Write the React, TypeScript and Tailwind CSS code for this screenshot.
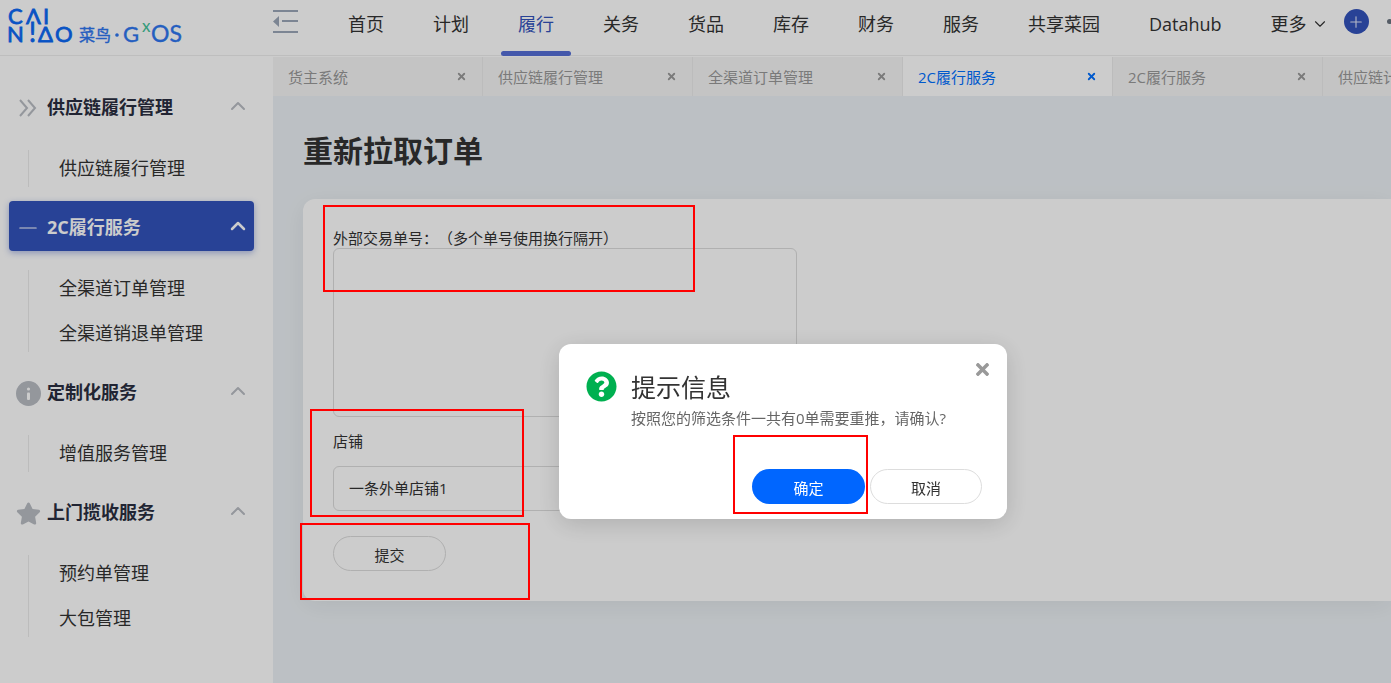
import React, { useState } from 'react';
import { ChevronDown, ChevronUp, Minus, Plus, X } from 'lucide-react';
import { FaQuestionCircle, FaStar, FaTimes } from 'react-icons/fa';

type MenuGroup = {
  title: string;
  icon: React.ReactNode;
  active?: boolean;
  items: string[];
};

const DoubleChevron: React.FC = () => (
  <svg width="18" height="18" viewBox="0 0 18 18" fill="none" stroke="currentColor" strokeWidth="2">
    <path d="M1 1l7 8-7 8M9 1l7 8-7 8" />
  </svg>
);

const InfoIcon: React.FC = () => (
  <svg width="25" height="25" viewBox="0 0 25 25">
    <circle cx="12.5" cy="12.5" r="12.5" fill="currentColor" />
    <circle cx="12.5" cy="8" r="1.6" fill="#ffffff" />
    <rect x="11" y="11.5" width="3" height="7.5" rx="1" fill="#ffffff" />
  </svg>
);

const navItems = ['首页', '计划', '履行', '关务', '货品', '库存', '财务', '服务', '共享菜园', 'Datahub'];

const tabs = ['货主系统', '供应链履行管理', '全渠道订单管理', '2C履行服务', '2C履行服务', '供应链计划'];

const menuGroups: MenuGroup[] = [
  {
    title: '供应链履行管理',
    icon: <DoubleChevron />,
    items: ['供应链履行管理'],
  },
  {
    title: '2C履行服务',
    icon: <Minus size={30} strokeWidth={1} />,
    active: true,
    items: ['全渠道订单管理', '全渠道销退单管理'],
  },
  {
    title: '定制化服务',
    icon: <InfoIcon />,
    items: ['增值服务管理'],
  },
  {
    title: '上门揽收服务',
    icon: <FaStar size={25} />,
    items: ['预约单管理', '大包管理'],
  },
];

const Logo: React.FC = () => (
  <svg width="190" height="56" viewBox="0 0 190 56" className="shrink-0 font-['Lato','Noto_Sans_CJK_SC',sans-serif]">
    <g fill="#0b68f5" stroke="#0b68f5" strokeWidth="0.8" fontSize="22">
      <text x="4" y="24">C</text>
      <text x="22" y="24">Λ</text>
      <text x="39" y="24">I</text>
      <text x="3" y="42">N</text>
      <text x="25" y="42" fontSize="26">!</text>
      <text x="34" y="42">Δ</text>
      <text x="51" y="42">O</text>
    </g>
    <g fill="#2e76f0" stroke="#2e76f0" strokeWidth="0.4">
      <text x="75" y="41" fontSize="16">菜鸟</text>
      <circle cx="113" cy="35" r="1.6" />
      <text x="119" y="42" fontSize="22">G</text>
      <text x="147" y="42" fontSize="23">OS</text>
    </g>
    <text x="138" y="32" fontSize="17" fill="#41c39a">x</text>
  </svg>
);

const Header: React.FC = () => (
  <header className="flex h-14 shrink-0 overflow-hidden bg-white shadow-[inset_0_-1px_0_#eeeeee]">
    <div className="w-[273px] shrink-0 pl-1">
      <Logo />
    </div>
    <button type="button" aria-label="收起菜单" className="mr-[50px] h-[43px] shrink-0">
      <svg width="25" height="24" viewBox="0 0 25 24" fill="#9ca7b8">
        <rect width="25" height="2" />
        <rect x="9" y="10" width="16" height="2" />
        <rect y="21" width="25" height="2" />
        <path d="M0 11.500 6 6v11z" />
      </svg>
    </button>
    <nav className="flex shrink-0 gap-[49px] text-lg text-[#333333]">
      {navItems.map((item) => (
        <a
          key={item}
          href="#"
          className={item === '履行' ? 'relative leading-[48px] text-[#3353bc]' : 'leading-[48px]'}
        >
          {item}
          {item === '履行' && (
            <span className="absolute -inset-x-[17px] bottom-0 h-[5px] rounded-full bg-[#556fd6]" />
          )}
        </a>
      ))}
      <button type="button" className="flex h-12 items-center gap-1">
        更多
        <ChevronDown size={18} strokeWidth={1.5} />
      </button>
    </nav>
    <div className="flex h-[43px] shrink-0 items-center gap-[18px] pl-[15px]">
      <button
        type="button"
        aria-label="新增"
        className="flex size-[25px] items-center justify-center rounded-full bg-[#3353bc] text-[#dfe5f8]"
      >
        <Plus size={18} strokeWidth={1.5} />
      </button>
      <span className="size-[5px] rounded-full bg-[#6b7480]" />
    </div>
  </header>
);

const Sidebar: React.FC = () => (
  <aside className="w-[273px] shrink-0 bg-white pt-[25px] pr-[19px] pl-[9px]">
    {menuGroups.map((group) => (
      <div key={group.title} className="mb-2.5">
        <button
          type="button"
          className={
            group.active
              ? 'flex h-[50px] w-full items-center rounded bg-[#3353bc] pr-2 pl-[5px] text-white shadow-[0_2px_6px_rgba(51,83,188,0.4)]'
              : 'flex h-[50px] w-full items-center pr-2 pl-[5px] text-[#2a2e40]'
          }
        >
          <span
            className={
              group.active
                ? 'flex w-7 items-center justify-center pt-1'
                : 'flex w-7 items-center justify-center pt-1 text-[#b9bdc4]'
            }
          >
            {group.icon}
          </span>
          <span className="ml-[5px] flex-1 pt-0.5 text-left text-lg font-bold">{group.title}</span>
          <ChevronUp
            size={24}
            strokeWidth={group.active ? 2.5 : 2}
            className={group.active ? '-mr-1' : '-mr-1 text-[#b9bdc4]'}
          />
        </button>
        <div className="mt-[15px] flex">
          <div className="my-1 ml-[19px] w-px bg-[#ebebeb]" />
          <ul className="pl-[30px]">
            {group.items.map((item) => (
              <li key={item} className="h-[45px] text-lg leading-[45px]">
                <a href="#">{item}</a>
              </li>
            ))}
          </ul>
        </div>
      </div>
    ))}
  </aside>
);

const TabBar: React.FC = () => (
  <div className="flex h-10 shrink-0 overflow-hidden border-t border-white bg-[#f6f6f6] text-[15px]">
    {tabs.map((tab, index) => (
      <div
        key={index}
        className={
          index === 3
            ? 'flex w-[210px] shrink-0 items-center justify-between border-r border-[#ececec] bg-white px-[15px] text-[#0070ff]'
            : 'flex w-[210px] shrink-0 items-center justify-between border-r border-[#ececec] px-[15px] text-[#999999]'
        }
      >
        <a href="#" className="pt-0.5">{tab}</a>
        <button type="button" aria-label="关闭标签">
          <X size={11} strokeWidth={4} />
        </button>
      </div>
    ))}
  </div>
);

const OrderForm: React.FC = () => {
  const [orderNos, setOrderNos] = useState('');

  return (
    <form
      onSubmit={(e) => e.preventDefault()}
      className="flex flex-col items-start rounded-l-xl bg-white px-[30px] pt-[29px] pb-[30px] text-[15px] shadow-[0_5px_24px_rgba(0,0,0,0.06)]"
    >
      <label htmlFor="orderNos" className="leading-5 [text-spacing-trim:space-all]">
        外部交易单号：（多个单号使用换行隔开）
      </label>
      <textarea
        id="orderNos"
        value={orderNos}
        onChange={(e) => setOrderNos(e.target.value)}
        className="h-[169px] w-[464px] resize-none rounded-md border border-[#dcdcdc] p-4 outline-none"
      />
      <label htmlFor="shop" className="mt-[14px] leading-5">
        店铺
      </label>
      <select
        id="shop"
        className="mt-[15px] h-[45px] w-[464px] appearance-none rounded-md border border-[#dcdcdc] px-[15px] outline-none"
      >
        <option>一条外单店铺1</option>
      </select>
      <button type="submit" className="mt-[25px] h-[35px] w-[113px] rounded-full border border-[#dcdcdc] pt-1">
        提交
      </button>
    </form>
  );
};

const ConfirmDialog: React.FC = () => (
  <div
    role="dialog"
    aria-labelledby="dialogTitle"
    className="fixed top-[344px] left-[559px] flex w-[448px] flex-col rounded-xl bg-white px-[25px] pt-[25px] pb-[15px] shadow-[0_5px_24px_rgba(0,0,0,0.15)]"
  >
    <button type="button" aria-label="关闭" className="absolute top-4 right-[15px] text-[#999999]">
      <FaTimes size={19} />
    </button>
    <div className="flex gap-[14px] pl-0.5">
      <FaQuestionCircle size={31} className="mt-0.5 shrink-0 text-[#00b050]" />
      <div>
        <h2 id="dialogTitle" className="text-[25px] leading-9 text-[#333333]">
          提示信息
        </h2>
        <p className="text-[15px] leading-[26px] text-[#666666]">按照您的筛选条件一共有0单需要重推，请确认?</p>
      </div>
    </div>
    <div className="mt-[38px] flex justify-end gap-[5px] text-[15px]">
      <button type="button" className="h-[35px] w-[113px] rounded-full bg-[#0066ff] pt-1 text-white">
        确定
      </button>
      <button type="button" className="h-[35px] w-28 rounded-full border border-[#dddddd] pt-1">
        取消
      </button>
    </div>
  </div>
);

// red frames that mark the steps of the guide
const Highlights: React.FC = () => (
  <div className="pointer-events-none fixed inset-0">
    <div className="absolute top-[205px] left-[323px] h-[87px] w-[372px] border-2 border-[#ff0000]" />
    <div className="absolute top-[409px] left-[310px] h-[108px] w-[214px] border-2 border-[#ff0000]" />
    <div className="absolute top-[523px] left-[300px] h-[77px] w-[230px] border-2 border-[#ff0000]" />
    <div className="absolute top-[435px] left-[733px] h-[79px] w-[135px] border-2 border-[#ff0000]" />
  </div>
);

const App: React.FC = () => {
  return (
    <div className="flex min-h-screen flex-col font-['Open_Sans','Noto_Sans_CJK_SC',sans-serif] text-[#333333]">
      <Header />
      <div className="flex flex-1">
        <Sidebar />
        <div className="flex min-w-0 flex-1 flex-col bg-[#ecf1f5]">
          <TabBar />
          <main className="pt-8 pl-[30px]">
            <h1 className="mb-[26px] text-3xl leading-[45px] font-bold">重新拉取订单</h1>
            <OrderForm />
          </main>
        </div>
      </div>
      <div className="fixed inset-0 bg-black/20" />
      <ConfirmDialog />
      <Highlights />
    </div>
  );
};

export default App;
